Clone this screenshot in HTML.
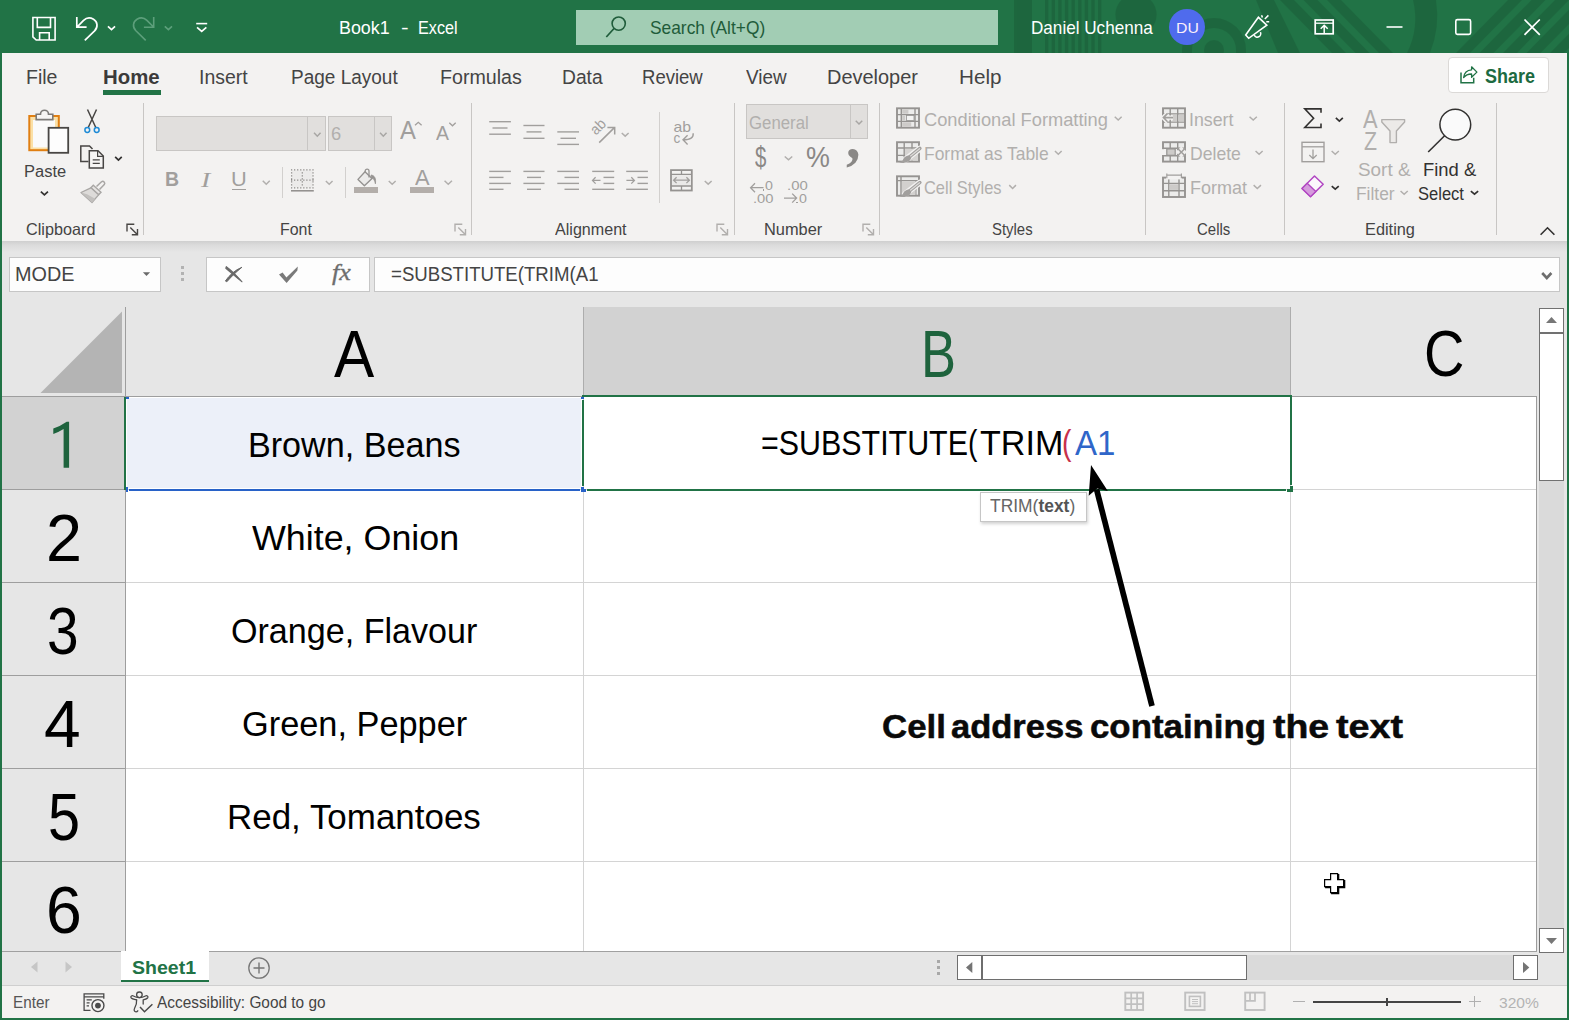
<!DOCTYPE html>
<html><head><meta charset="utf-8"><title>Book1 - Excel</title>
<style>
html,body{margin:0;padding:0}
body{width:1569px;height:1020px;position:relative;overflow:hidden;background:#fff;font-family:"Liberation Sans",sans-serif}
.t{position:absolute;white-space:nowrap;line-height:1;transform-origin:0 0}
.r{position:absolute;box-sizing:border-box;overflow:visible}
</style></head><body>
<div class="r" style="left:0px;top:0px;width:1569px;height:53px;background:#217346;"></div>
<div class="r" style="left:0px;top:53px;width:1569px;height:188px;background:#f3f2f1;"></div>
<div class="r" style="left:0px;top:241px;width:1569px;height:11px;background:linear-gradient(#cfcfcf,#dcdcdc 40%,#e6e6e6);"></div>
<div class="r" style="left:0px;top:252px;width:1569px;height:145px;background:#e6e6e6;"></div>
<div class="r" style="left:0px;top:397px;width:1569px;height:554px;background:#fff;"></div>
<div class="r" style="left:0px;top:951px;width:1569px;height:35px;background:#e6e6e6;"></div>
<div class="r" style="left:0px;top:986px;width:1569px;height:34px;background:#f3f2f1;"></div>
<svg class="r" style="left:1000px;top:0;overflow:hidden" width="569" height="53" viewBox="0 0 569 53" fill="none"><g fill="#000" opacity=".1"><rect x="14" y="0" width="18" height="53"/><rect x="45.0" y="0" width="3.4" height="53"/><rect x="51.6" y="0" width="3.4" height="53"/><rect x="58.2" y="0" width="3.4" height="53"/><rect x="64.9" y="0" width="3.4" height="53"/><rect x="71.5" y="0" width="3.4" height="53"/><rect x="78.1" y="0" width="3.4" height="53"/><rect x="84.7" y="0" width="3.4" height="53"/><rect x="91.3" y="0" width="3.4" height="53"/><rect x="98.0" y="0" width="3.4" height="53"/><circle cx="136" cy="14.6" r="20.6"/><path d="M214 18 a32 32 0 0 1 32 32 v3 h-10 v-3 a22 22 0 0 0 -22 -22 a22 22 0 0 0 -22 22 v3 h-10 v-3 a32 32 0 0 1 32 -32 Z"/><circle cx="214" cy="50" r="10"/><path d="M256 0 h18 l26 53 h-22 Z"/><path d="M280 0 h14 l52 53 h-14 Z"/><path d="M303.5 0 h14 l52 53 h-14 Z"/><path d="M327 0 h14 l52 53 h-14 Z"/><path d="M413 0 H436 A100 100 0 0 1 430 53 H407 A78 78 0 0 0 413 0 Z"/><path d="M456 53 h14 l52 -53 h-14 Z"/><path d="M479.5 53 h14 l52 -53 h-14 Z"/><path d="M503 53 h14 l52 -53 h-14 Z"/><path d="M526.5 53 h14 l52 -53 h-14 Z"/><path d="M550 53 h14 l52 -53 h-14 Z"/></g></svg>
<div class="t" style="left:339.43px;top:18.92px;font-size:18.17px;color:#fff;transform:scaleX(0.9848);">Book1</div>
<div class="t" style="left:400.79px;top:18.92px;font-size:18.17px;color:#fff;transform:scaleX(1.2581);">-</div>
<div class="t" style="left:417.67px;top:18.92px;font-size:18.17px;color:#fff;transform:scaleX(0.8914);">Excel</div>
<div class="r" style="left:576px;top:10px;width:422px;height:35px;background:#a2cdb4;"></div>
<div class="t" style="left:650.22px;top:18.92px;font-size:18.17px;color:#1f5c3a;transform:scaleX(0.9552);">Search (Alt+Q)</div>
<div class="t" style="left:1030.70px;top:19.02px;font-size:18.17px;color:#fff;transform:scaleX(0.9421);">Daniel Uchenna</div>
<div class="r" style="left:1169px;top:9px;width:36px;height:36px;background:#4f6bed;border-radius:50%"></div>
<div class="t" style="left:1175.96px;top:20.13px;font-size:15.55px;color:#fbeffa;transform:scaleX(1.0133);">DU</div>
<div class="t" style="left:26.40px;top:66.77px;font-size:20.35px;color:#444444;transform:scaleX(0.9597);">File</div>
<div class="t" style="left:198.96px;top:66.77px;font-size:20.35px;color:#444444;transform:scaleX(0.9565);">Insert</div>
<div class="t" style="left:290.94px;top:66.77px;font-size:20.35px;color:#444444;transform:scaleX(0.9336);">Page Layout</div>
<div class="t" style="left:440.14px;top:66.77px;font-size:20.35px;color:#444444;transform:scaleX(0.9647);">Formulas</div>
<div class="t" style="left:561.52px;top:66.77px;font-size:20.35px;color:#444444;transform:scaleX(0.9465);">Data</div>
<div class="t" style="left:642.18px;top:66.77px;font-size:20.35px;color:#444444;transform:scaleX(0.9107);">Review</div>
<div class="t" style="left:745.72px;top:66.77px;font-size:20.35px;color:#444444;transform:scaleX(0.9289);">View</div>
<div class="t" style="left:827.26px;top:66.77px;font-size:20.35px;color:#444444;transform:scaleX(0.9807);">Developer</div>
<div class="t" style="left:959.00px;top:66.77px;font-size:20.35px;color:#444444;transform:scaleX(1.0169);">Help</div>
<div class="t" style="left:102.64px;top:66.77px;font-size:20.35px;color:#3b3a39;transform:scaleX(1.0005);font-weight:700;">Home</div>
<div class="r" style="left:103px;top:90px;width:57.5px;height:4.8px;background:#217346;"></div>
<div class="r" style="left:1448px;top:57px;width:101px;height:35.5px;background:#fff;border:1px solid #dbd9d7;border-radius:4px"></div>
<div class="t" style="left:1484.58px;top:66.27px;font-size:20.35px;color:#1d6b41;transform:scaleX(0.8830);font-weight:700;">Share</div>
<div class="r" style="left:143px;top:103px;width:1px;height:132px;background:#c8c6c4;"></div>
<div class="r" style="left:471px;top:103px;width:1px;height:132px;background:#c8c6c4;"></div>
<div class="r" style="left:733.5px;top:103px;width:1px;height:132px;background:#c8c6c4;"></div>
<div class="r" style="left:879px;top:103px;width:1px;height:132px;background:#c8c6c4;"></div>
<div class="r" style="left:1145px;top:103px;width:1px;height:132px;background:#c8c6c4;"></div>
<div class="r" style="left:1284px;top:103px;width:1px;height:132px;background:#c8c6c4;"></div>
<div class="r" style="left:1496px;top:103px;width:1px;height:132px;background:#c8c6c4;"></div>
<div class="r" style="left:282px;top:166.5px;width:1px;height:31.0px;background:#d2d0ce;"></div>
<div class="r" style="left:345px;top:166.5px;width:1px;height:31.0px;background:#d2d0ce;"></div>
<div class="r" style="left:659px;top:112px;width:1px;height:90.5px;background:#d2d0ce;"></div>
<div class="t" style="left:25.59px;top:221.02px;font-size:16.28px;color:#444;transform:scaleX(0.9968);">Clipboard</div>
<div class="t" style="left:279.69px;top:221.02px;font-size:16.28px;color:#444;transform:scaleX(0.9799);">Font</div>
<div class="t" style="left:554.67px;top:221.02px;font-size:16.28px;color:#444;transform:scaleX(0.9897);">Alignment</div>
<div class="t" style="left:764.26px;top:221.02px;font-size:16.28px;color:#444;transform:scaleX(1.0069);">Number</div>
<div class="t" style="left:991.63px;top:221.02px;font-size:16.28px;color:#444;transform:scaleX(0.9161);">Styles</div>
<div class="t" style="left:1197.45px;top:221.02px;font-size:16.28px;color:#444;transform:scaleX(0.9198);">Cells</div>
<div class="t" style="left:1365.06px;top:221.02px;font-size:16.28px;color:#444;transform:scaleX(1.0045);">Editing</div>
<div class="t" style="left:23.55px;top:162.96px;font-size:17.30px;color:#444444;transform:scaleX(0.9537);">Paste</div>
<div class="r" style="left:156px;top:116px;width:170px;height:35px;background:#e1dfdd;border:1px solid #c8c6c4"></div>
<div class="r" style="left:307px;top:116px;width:1px;height:35px;background:#c8c6c4;"></div>
<div class="r" style="left:328px;top:116px;width:64px;height:35px;background:#e1dfdd;border:1px solid #c8c6c4"></div>
<div class="r" style="left:373.5px;top:116px;width:1px;height:35px;background:#c8c6c4;"></div>
<div class="t" style="left:331.08px;top:125.29px;font-size:18.31px;color:#b1afad;transform:scaleX(1.0024);">6</div>
<div class="t" style="left:164.99px;top:169.49px;font-size:20.20px;color:#a19f9d;transform:scaleX(0.9656);font-weight:700;">B</div>
<div class="t" style="left:200.91px;top:169.68px;font-size:20.20px;color:#a19f9d;transform:scaleX(1.3822);font-style:italic;font-family:'Liberation Serif',serif;">I</div>
<div class="t" style="left:231.22px;top:169.49px;font-size:20.20px;color:#a19f9d;transform:scaleX(1.0806);">U</div>
<div class="r" style="left:232px;top:188.5px;width:14px;height:1.4px;background:#a19f9d;"></div>
<div class="t" style="left:399.85px;top:117.59px;font-size:25.87px;color:#a19f9d;transform:scaleX(0.9211);">A</div>
<div class="t" style="left:435.96px;top:121.66px;font-size:21.08px;color:#a19f9d;transform:scaleX(0.9232);">A</div>
<div class="t" style="left:415.46px;top:165.80px;font-size:22.67px;color:#a19f9d;transform:scaleX(0.9645);">A</div>
<div class="r" style="left:410px;top:187px;width:24px;height:6px;background:#b3aeaa;"></div>
<div class="r" style="left:354px;top:187px;width:24px;height:6px;background:#b3aeaa;"></div>
<div class="r" style="left:746px;top:104px;width:122px;height:34.5px;background:#e1dfdd;border:1px solid #c8c6c4"></div>
<div class="r" style="left:849.5px;top:104px;width:1px;height:34.5px;background:#c8c6c4;"></div>
<div class="t" style="left:748.56px;top:113.54px;font-size:18.02px;color:#b1afad;transform:scaleX(0.9320);">General</div>
<div class="t" style="left:755.38px;top:142.65px;font-size:29.00px;color:#8a8886;transform:scaleX(0.7040);">$</div>
<div class="t" style="left:805.86px;top:142.22px;font-size:29.51px;color:#8a8886;transform:scaleX(0.9104);">%</div>
<div class="t" style="left:845.84px;top:105.68px;font-size:62.00px;color:#8a8886;transform:scaleX(0.9402);font-weight:700;font-family:'Liberation Serif',serif;">,</div>
<div class="t" style="left:923.89px;top:110.99px;font-size:18.31px;color:#b1afad;transform:scaleX(0.9992);">Conditional Formatting</div>
<div class="t" style="left:923.77px;top:144.79px;font-size:18.31px;color:#b1afad;transform:scaleX(0.9529);">Format as Table</div>
<div class="t" style="left:923.98px;top:178.69px;font-size:18.31px;color:#b1afad;transform:scaleX(0.8971);">Cell Styles</div>
<div class="t" style="left:1189.46px;top:110.99px;font-size:18.31px;color:#b1afad;transform:scaleX(0.9707);">Insert</div>
<div class="t" style="left:1189.66px;top:144.79px;font-size:18.31px;color:#b1afad;transform:scaleX(0.9621);">Delete</div>
<div class="t" style="left:1189.62px;top:178.69px;font-size:18.31px;color:#b1afad;transform:scaleX(0.9846);">Format</div>
<div class="t" style="left:1357.95px;top:160.74px;font-size:18.02px;color:#b1afad;transform:scaleX(1.0489);">Sort &amp;</div>
<div class="t" style="left:1355.98px;top:184.54px;font-size:18.02px;color:#b1afad;transform:scaleX(0.9639);">Filter</div>
<div class="t" style="left:1422.89px;top:160.74px;font-size:18.02px;color:#323130;transform:scaleX(1.0211);">Find &amp;</div>
<div class="t" style="left:1418.16px;top:184.54px;font-size:18.02px;color:#323130;transform:scaleX(0.9176);">Select</div>
<div class="t" style="left:1362.86px;top:106.59px;font-size:25.29px;color:#b1afad;transform:scaleX(0.8648);">A</div>
<div class="t" style="left:1364.14px;top:128.59px;font-size:25.29px;color:#b1afad;transform:scaleX(0.8427);">Z</div>
<div class="r" style="left:9px;top:257px;width:152px;height:35px;background:#fdfdfd;border:1px solid #c6c6c6"></div>
<div class="t" style="left:15.37px;top:265.01px;font-size:19.77px;color:#444444;transform:scaleX(1.0030);">MODE</div>
<div class="r" style="left:206px;top:257px;width:164px;height:35px;background:#fdfdfd;border:1px solid #c6c6c6"></div>
<div class="r" style="left:374px;top:257px;width:1186px;height:35px;background:#fdfdfd;border:1px solid #c6c6c6"></div>
<div class="t" style="left:390.86px;top:265.38px;font-size:19.33px;color:#444444;transform:scaleX(0.9637);">=SUBSTITUTE(TRIM(A1</div>
<div class="t" style="left:332.21px;top:260.20px;font-size:24.00px;color:#6e6e6e;transform:scaleX(1.0801);font-style:italic;font-family:'Liberation Serif',serif;-webkit-text-stroke:0.35px #6e6e6e;">fx</div>
<div class="r" style="left:181px;top:266px;width:3px;height:3px;background:#b2b2b2;"></div>
<div class="r" style="left:181px;top:272px;width:3px;height:3px;background:#b2b2b2;"></div>
<div class="r" style="left:181px;top:278px;width:3px;height:3px;background:#b2b2b2;"></div>
<div class="r" style="left:584px;top:307px;width:706px;height:89px;background:#d2d2d2;"></div>
<div class="r" style="left:0px;top:397px;width:125px;height:554px;background:#e6e6e6;"></div>
<div class="r" style="left:2px;top:397px;width:123px;height:92px;background:#d2d2d2;"></div>
<div class="r" style="left:125px;top:307px;width:1px;height:90px;background:#9e9e9e;"></div>
<div class="r" style="left:583px;top:307px;width:1px;height:90px;background:#adadad;"></div>
<div class="r" style="left:1290px;top:307px;width:1px;height:90px;background:#adadad;"></div>
<div class="r" style="left:125px;top:397px;width:1px;height:554px;background:#9e9e9e;"></div>
<div class="r" style="left:2px;top:396px;width:1535px;height:1px;background:#9e9e9e;"></div>
<div class="r" style="left:1536px;top:396px;width:1px;height:556px;background:#9c9c9c;"></div>
<div class="r" style="left:2px;top:951px;width:1535px;height:1px;background:#a0a0a0;"></div>
<div class="r" style="left:2px;top:489px;width:123px;height:1px;background:#9e9e9e;"></div>
<div class="r" style="left:126px;top:489px;width:1410px;height:1px;background:#d4d4d4;"></div>
<div class="r" style="left:2px;top:582px;width:123px;height:1px;background:#9e9e9e;"></div>
<div class="r" style="left:126px;top:582px;width:1410px;height:1px;background:#d4d4d4;"></div>
<div class="r" style="left:2px;top:675px;width:123px;height:1px;background:#9e9e9e;"></div>
<div class="r" style="left:126px;top:675px;width:1410px;height:1px;background:#d4d4d4;"></div>
<div class="r" style="left:2px;top:768px;width:123px;height:1px;background:#9e9e9e;"></div>
<div class="r" style="left:126px;top:768px;width:1410px;height:1px;background:#d4d4d4;"></div>
<div class="r" style="left:2px;top:861px;width:123px;height:1px;background:#9e9e9e;"></div>
<div class="r" style="left:126px;top:861px;width:1410px;height:1px;background:#d4d4d4;"></div>
<div class="r" style="left:583px;top:397px;width:1px;height:554px;background:#d4d4d4;"></div>
<div class="r" style="left:1290px;top:397px;width:1px;height:554px;background:#d4d4d4;"></div>
<div class="t" style="left:334.38px;top:320.50px;font-size:66.13px;color:#000;transform:scaleX(0.9123);">A</div>
<div class="t" style="left:920.69px;top:320.50px;font-size:66.13px;color:#1e633d;transform:scaleX(0.7943);">B</div>
<div class="t" style="left:1423.70px;top:322.20px;font-size:64.36px;color:#000;transform:scaleX(0.8700);">C</div>
<div class="t" style="left:45.52px;top:505.13px;font-size:66.28px;color:#000;transform:scaleX(0.9761);">2</div>
<div class="t" style="left:47.09px;top:598.18px;font-size:66.28px;color:#000;transform:scaleX(0.8576);">3</div>
<div class="t" style="left:44.38px;top:690.34px;font-size:67.15px;color:#000;transform:scaleX(0.9810);">4</div>
<div class="t" style="left:47.90px;top:784.28px;font-size:66.28px;color:#000;transform:scaleX(0.8690);">5</div>
<div class="t" style="left:45.68px;top:877.18px;font-size:66.28px;color:#000;transform:scaleX(0.9711);">6</div>
<div class="r" style="left:127px;top:398px;width:454px;height:90px;background:#ecf0f9;"></div>
<div class="r" style="left:129px;top:489px;width:451px;height:2px;background:#2862c8;"></div>
<div class="r" style="left:126px;top:397px;width:2.7px;height:2px;background:#2862c8;"></div>
<div class="r" style="left:126px;top:487px;width:2px;height:5px;background:#2862c8;"></div>
<div class="r" style="left:581px;top:397px;width:3px;height:2px;background:#2862c8;"></div>
<div class="r" style="left:124px;top:397px;width:2px;height:93px;background:#217346;"></div>
<div class="t" style="left:248.20px;top:428.08px;font-size:34.45px;color:#000;transform:scaleX(0.9909);">Brown, Beans</div>
<div class="t" style="left:251.86px;top:520.53px;font-size:34.45px;color:#000;transform:scaleX(1.0406);">White, Onion</div>
<div class="t" style="left:230.90px;top:613.83px;font-size:34.45px;color:#000;transform:scaleX(0.9899);">Orange, Flavour</div>
<div class="t" style="left:242.03px;top:706.83px;font-size:34.45px;color:#000;transform:scaleX(0.9969);">Green, Pepper</div>
<div class="t" style="left:227.33px;top:799.63px;font-size:34.45px;color:#000;transform:scaleX(1.0148);">Red, Tomantoes</div>
<div class="r" style="left:582px;top:395px;width:710px;height:2px;background:#217346;"></div>
<div class="r" style="left:587px;top:489px;width:699px;height:2px;background:#217346;"></div>
<div class="r" style="left:582px;top:400px;width:2px;height:86px;background:#217346;"></div>
<div class="r" style="left:1290px;top:395px;width:2px;height:90px;background:#217346;"></div>
<div class="r" style="left:1290px;top:486px;width:3px;height:6px;background:#217346;"></div>
<div class="r" style="left:1287px;top:489px;width:3px;height:3px;background:#217346;"></div>
<div class="r" style="left:581px;top:487px;width:3px;height:5px;background:#2862c8;"></div>
<div class="r" style="left:584px;top:489px;width:2px;height:3px;background:#2862c8;"></div>
<div class="t" style="left:760.54px;top:426.43px;font-size:34.45px;color:#000;transform:scaleX(0.8829);">=SUBSTITUTE</div>
<div class="t" style="left:968.25px;top:426.43px;font-size:34.45px;color:#000;transform:scaleX(0.8216);">(</div>
<div class="t" style="left:980.25px;top:426.43px;font-size:34.45px;color:#000;transform:scaleX(0.9894);">TRIM</div>
<div class="t" style="left:1062.00px;top:426.43px;font-size:34.45px;color:#c8324b;transform:scaleX(0.8216);">(</div>
<div class="t" style="left:1074.93px;top:426.43px;font-size:34.45px;color:#2f66c9;transform:scaleX(0.9590);">A1</div>
<div class="r" style="left:980px;top:492.4px;width:107px;height:30px;background:#fff;border:1px solid #c6c6c6;box-shadow:1px 2px 3px rgba(0,0,0,.18)"></div>
<div class="t" style="left:990.37px;top:497.00px;font-size:18.90px;transform:scaleX(0.9226)"><span style="color:#666;">TRIM(</span><span style="color:#555;font-weight:700;">text</span><span style="color:#666;">)</span></div>
<div class="t" style="left:881.57px;top:711.19px;font-size:32.85px;color:#0a0a0a;transform:scaleX(1.0607);font-weight:700;-webkit-text-stroke:0.5px #0a0a0a;">Cell</div>
<div class="t" style="left:951.00px;top:711.19px;font-size:32.85px;color:#0a0a0a;transform:scaleX(1.0511);font-weight:700;-webkit-text-stroke:0.5px #0a0a0a;">address</div>
<div class="t" style="left:1089.89px;top:711.19px;font-size:32.85px;color:#0a0a0a;transform:scaleX(1.0611);font-weight:700;-webkit-text-stroke:0.5px #0a0a0a;">containing</div>
<div class="t" style="left:1272.55px;top:711.19px;font-size:32.85px;color:#0a0a0a;transform:scaleX(1.1411);font-weight:700;-webkit-text-stroke:0.5px #0a0a0a;">the</div>
<div class="t" style="left:1335.80px;top:711.19px;font-size:32.85px;color:#0a0a0a;transform:scaleX(1.1498);font-weight:700;-webkit-text-stroke:0.5px #0a0a0a;">text</div>
<div class="r" style="left:1537px;top:307px;width:30px;height:645px;background:#e6e6e6;"></div>
<div class="r" style="left:1539px;top:333px;width:25px;height:596px;background:#dadada;"></div>
<div class="r" style="left:1539px;top:308px;width:25px;height:25px;background:#fff;border:1px solid #717171"></div>
<div class="r" style="left:1539px;top:333px;width:25px;height:148px;background:#fff;border:1px solid #717171"></div>
<div class="r" style="left:1539px;top:928px;width:25px;height:25px;background:#fff;border:1px solid #717171"></div>
<div class="r" style="left:957px;top:955px;width:581px;height:25px;background:#dadada;"></div>
<div class="r" style="left:957px;top:955px;width:25px;height:25px;background:#fff;border:1px solid #6e6e6e"></div>
<div class="r" style="left:982px;top:955px;width:265px;height:25px;background:#fff;border:1px solid #6e6e6e"></div>
<div class="r" style="left:1513px;top:955px;width:25px;height:25px;background:#fff;border:1px solid #6e6e6e"></div>
<div class="r" style="left:937px;top:960px;width:3px;height:3px;background:#a8a8a8;"></div>
<div class="r" style="left:937px;top:966px;width:3px;height:3px;background:#a8a8a8;"></div>
<div class="r" style="left:937px;top:972px;width:3px;height:3px;background:#a8a8a8;"></div>
<div class="r" style="left:120.5px;top:951px;width:88.5px;height:31px;background:#fff;"></div>
<div class="r" style="left:120.5px;top:979.5px;width:88.5px;height:2.6px;background:#217346;"></div>
<div class="t" style="left:131.93px;top:957.88px;font-size:19.04px;color:#217346;transform:scaleX(1.0266);font-weight:700;">Sheet1</div>
<div class="r" style="left:0px;top:985px;width:1569px;height:1px;background:#cfcfcf;"></div>
<div class="t" style="left:12.50px;top:994.42px;font-size:16.28px;color:#555;transform:scaleX(0.9380);">Enter</div>
<div class="t" style="left:156.97px;top:994.42px;font-size:16.28px;color:#444;transform:scaleX(0.9463);">Accessibility: Good to go</div>
<div class="t" style="left:1499.41px;top:994.55px;font-size:15.41px;color:#b4b4b4;transform:scaleX(1.0125);">320%</div>
<div class="r" style="left:1313px;top:1000.6px;width:148px;height:2px;background:#444;"></div>
<div class="r" style="left:1386px;top:997.5px;width:2.4px;height:8.6px;background:#444;"></div>
<div class="r" style="left:1293px;top:1001px;width:11.5px;height:1.3px;background:#b0b0b0;"></div>
<div class="r" style="left:1469px;top:1001px;width:11.5px;height:1.3px;background:#b0b0b0;"></div>
<div class="r" style="left:1474.1px;top:995.8px;width:1.3px;height:11.5px;background:#b0b0b0;"></div>
<div class="t" style="left:765.45px;top:179.35px;font-size:13.52px;color:#a19f9d;transform:scaleX(1.0524);">0</div>
<div class="t" style="left:752.86px;top:191.75px;font-size:13.52px;color:#a19f9d;transform:scaleX(1.0921);">.00</div>
<div class="r" style="left:762.6px;top:189.3px;width:1.6px;height:1.6px;background:#a19f9d;"></div>
<div class="t" style="left:786.64px;top:179.35px;font-size:13.52px;color:#a19f9d;transform:scaleX(1.1038);">.00</div>
<div class="t" style="left:799.45px;top:191.75px;font-size:13.52px;color:#a19f9d;transform:scaleX(1.0524);">0</div>
<div class="r" style="left:796.4px;top:201.7px;width:1.6px;height:1.6px;background:#a19f9d;"></div>
<svg class="r" style="left:0;top:0" width="1569" height="1020" viewBox="0 0 1569 1020" fill="none"><path d="M122 311.5 V393 H40.5 Z" fill="#b4b4b4"/>
<path d="M69.1 421.8 L66.7 421.8 Q60.5 426.2 53.3 428.5 L53.3 433.9 Q58.8 432.2 63.6 429.1 L63.6 467.8 L69.1 467.8 Z" fill="#1e633d"/>
<path d="M1152 706 L1096.6 489.5" stroke="#000" stroke-width="5.7" stroke-linecap="butt"/>
<path d="M1091 465 L1107.8 491 L1097.2 488.6 L1088.7 495.8 Z" fill="#000"/>
<path d="M1331.7 874.7 h7 v6 h6 v7 h-6 v6 h-7 v-6 h-6 v-7 h6 Z" fill="#000" stroke="#000" stroke-width="1.2"/>
<path d="M1330.6 873.6 h7 v6 h6 v7 h-6 v6 h-7 v-6 h-6 v-7 h6 Z" fill="#fff" stroke="#000" stroke-width="1.2"/>
<path d="M1546 323 L1551.5 317 L1557 323 Z" fill="#777"/>
<path d="M1546 938 L1557 938 L1551.5 944 Z" fill="#777"/>
<path d="M972.3 962 L972.3 973 L966 967.5 Z" fill="#747474"/>
<path d="M1523 962 L1523 973 L1529.3 967.5 Z" fill="#747474"/>
<path d="M37.5 961.5 L37.5 972.5 L31 967 Z" fill="#c6c6c6"/>
<path d="M65.5 961.5 L65.5 972.5 L72 967 Z" fill="#c6c6c6"/>
<circle cx="259" cy="968" r="10.2" stroke="#767676" stroke-width="1.3"/><path d="M253.5 968 h11 M259 962.5 v11" stroke="#767676" stroke-width="1.4"/>
<path d="M32.9 17.5 H55.1 V40 H36.2 L32.9 36.8 Z" stroke="#fff" stroke-width="1.6"/><path d="M37.3 17.5 V27.4 H50.5 V17.5 M39.6 40 V32.8 H49.2 V40" stroke="#fff" stroke-width="1.6"/>
<path d="M76.8 17 V27.2 H86.6 M77.2 26.8 L83.6 20.4 C86 18 90 17.2 93.5 19.2 C97.6 21.6 98.3 27 94.6 30.8 L84.8 40.4" stroke="#fff" stroke-width="1.7"/>
<path d="M107.95 26.35 L111.50 29.55 L115.05 26.35" stroke="#fff" stroke-width="1.7"/>
<path d="M153.7 17 V27.2 H143.9 M153.3 26.8 L146.9 20.4 C144.5 18 140.5 17.2 137 19.2 C132.9 21.6 132.2 27 135.9 30.8 L145.7 40.4" stroke="#5d9f7b" stroke-width="1.6"/>
<path d="M164.80 26.30 L168.40 29.60 L172.00 26.30" stroke="#5d9f7b" stroke-width="1.6"/>
<path d="M196.2 23.6 H207.2" stroke="#fff" stroke-width="1.6"/>
<path d="M197.05 27.45 L201.70 31.35 L206.35 27.45" stroke="#fff" stroke-width="1.7"/>
<circle cx="618.7" cy="23.6" r="6.6" stroke="#1f5c3a" stroke-width="1.6"/><path d="M614 28.5 L606.3 37" stroke="#1f5c3a" stroke-width="1.7"/>
<path d="M1245.7 35 L1258.4 17.3 L1266.8 25.2 L1248.7 38.3 Z" stroke="#fff" stroke-width="1.6" stroke-linejoin="miter"/><path d="M1254.2 35.2 a3.4 3.4 0 0 0 6.2 -3" stroke="#fff" stroke-width="1.5"/><path d="M1261.6 15.2 L1262.4 17.4 M1264.8 19 L1268.4 15.4 M1266.3 21.8 H1269.2" stroke="#fff" stroke-width="1.5"/>
<rect x="1315.2" y="20" width="18" height="13.8" stroke="#fff" stroke-width="1.7"/><path d="M1315 23.2 H1333.4" stroke="#fff" stroke-width="1.3"/><path d="M1324.2 33.6 V25.6 M1320.7 28.7 L1324.2 25.3 L1327.7 28.7" stroke="#fff" stroke-width="1.5"/>
<path d="M1386.5 27 H1402.5" stroke="#fff" stroke-width="1.6"/>
<rect x="1455.8" y="19.6" width="14.8" height="14.8" rx="1.6" stroke="#fff" stroke-width="1.6"/>
<path d="M1524.5 19.5 L1539.8 34.8 M1539.8 19.5 L1524.5 34.8" stroke="#fff" stroke-width="1.7"/>
<path d="M1461 72.4 V82.7 H1473.7 V77.7" stroke="#217346" stroke-width="1.5"/><path d="M1463.6 77.6 C1464.2 72.6 1467.2 70 1471.6 69.8 V66.8 L1476.9 72.1 L1471.6 77.2 V74 C1468 74 1465.6 75 1463.6 77.6 Z" stroke="#217346" stroke-width="1.3" stroke-linejoin="round"/>
<rect x="29.3" y="116" width="29.5" height="34.2" fill="#fbe0a6" stroke="#e07f12" stroke-width="2"/><rect x="33" y="120" width="22" height="27.5" fill="#fafafa"/><path d="M36.2 119.6 V114.2 H40.5 a4 4 0 0 1 8 0 H52.8 V119.6 Z" fill="#f6f5f4" stroke="#7d7b79" stroke-width="1.6"/><rect x="48.6" y="127.8" width="19.6" height="25" fill="#fdfdfd" stroke="#484644" stroke-width="1.8"/>
<path d="M40.85 191.65 L44.40 194.95 L47.95 191.65" stroke="#323130" stroke-width="1.7"/>
<path d="M87.5 109.5 L96 128 M96.5 109.5 L88 128" stroke="#484644" stroke-width="1.5"/><circle cx="87.3" cy="130" r="2.4" stroke="#1e8bd6" stroke-width="1.5"/><circle cx="96.7" cy="130" r="2.4" stroke="#1e8bd6" stroke-width="1.5"/>
<path d="M88.5 161.5 H80.8 V146 H89.5 L92.5 149" stroke="#484644" stroke-width="1.5"/><path d="M89.3 150.8 H98 L103.3 156 V168 H89.3 Z" fill="#f6f5f4" stroke="#484644" stroke-width="1.5"/><path d="M97.6 151 V156.4 H103" stroke="#484644" stroke-width="1.2"/><path d="M92.7 159.8 H99.8 M92.7 163.3 H99.8" stroke="#484644" stroke-width="1.2"/>
<path d="M115.15 156.85 L118.45 160.15 L121.75 156.85" stroke="#323130" stroke-width="1.7"/>
<path d="M96.5 186.5 L101.5 181.8 a2 2 0 0 1 2.8 2.8 L99.5 189.5" stroke="#a8a6a4" stroke-width="1.5"/><path d="M93.3 185.2 L101 192.2 L98.6 194.8 L90.9 187.8 Z" stroke="#a8a6a4" stroke-width="1.4" fill="#e6e4e2"/><path d="M90.9 187.8 L81 192.5 L92 202.5 L98.6 194.8 Z" fill="#dddbd9" stroke="#a8a6a4" stroke-width="1.3" stroke-linejoin="round"/><path d="M81 192.5 L92 202.5 L95.2 198.8 L87 194.2 Z" fill="#c2c0be"/>
<path d="M127.0 231.5 V224.2 H134.3" stroke="#484644" stroke-width="1.4"/><path d="M130.3 227.5 L137.3 234.5 M137.5 229.0 V234.7 H131.8" stroke="#484644" stroke-width="1.4"/>
<path d="M455.0 231.5 V224.2 H462.3" stroke="#b1afad" stroke-width="1.4"/><path d="M458.3 227.5 L465.3 234.5 M465.5 229.0 V234.7 H459.8" stroke="#b1afad" stroke-width="1.4"/>
<path d="M717.0 231.5 V224.2 H724.3" stroke="#b1afad" stroke-width="1.4"/><path d="M720.3 227.5 L727.3 234.5 M727.5 229.0 V234.7 H721.8" stroke="#b1afad" stroke-width="1.4"/>
<path d="M863.0 231.5 V224.2 H870.3" stroke="#b1afad" stroke-width="1.4"/><path d="M866.3 227.5 L873.3 234.5 M873.5 229.0 V234.7 H867.8" stroke="#b1afad" stroke-width="1.4"/>
<path d="M314.05 132.75 L317.30 136.25 L320.55 132.75" stroke="#a8a6a4" stroke-width="1.5"/>
<path d="M380.05 132.75 L383.30 136.25 L386.55 132.75" stroke="#a8a6a4" stroke-width="1.5"/>
<path d="M262.75 180.75 L266.25 184.25 L269.75 180.75" stroke="#b1afad" stroke-width="1.5"/>
<path d="M325.85 181.05 L329.20 184.25 L332.55 181.05" stroke="#b1afad" stroke-width="1.5"/>
<path d="M388.75 181.05 L392.20 184.25 L395.65 181.05" stroke="#b1afad" stroke-width="1.5"/>
<path d="M444.55 180.75 L448.25 184.25 L451.95 180.75" stroke="#b1afad" stroke-width="1.5"/>
<path d="M415 125.3 L418.3 122.3 L421.6 125.3" stroke="#a19f9d" stroke-width="1.3"/>
<path d="M449.3 122.8 L452.5 125.8 L455.7 122.8" stroke="#a19f9d" stroke-width="1.3"/>
<rect x="292" y="170.3" width="20.6" height="17.2" fill="#ecebea"/><path d="M290.98 169.28h1.25v1.25h-1.25zM290.98 187.28h1.25v1.25h-1.25zM290.98 179.47h1.25v1.25h-1.25zM294.03 169.28h1.25v1.25h-1.25zM294.03 187.28h1.25v1.25h-1.25zM294.03 179.47h1.25v1.25h-1.25zM297.09 169.28h1.25v1.25h-1.25zM297.09 187.28h1.25v1.25h-1.25zM297.09 179.47h1.25v1.25h-1.25zM300.15 169.28h1.25v1.25h-1.25zM300.15 187.28h1.25v1.25h-1.25zM300.15 179.47h1.25v1.25h-1.25zM303.20 169.28h1.25v1.25h-1.25zM303.20 187.28h1.25v1.25h-1.25zM303.20 179.47h1.25v1.25h-1.25zM306.26 169.28h1.25v1.25h-1.25zM306.26 187.28h1.25v1.25h-1.25zM306.26 179.47h1.25v1.25h-1.25zM309.32 169.28h1.25v1.25h-1.25zM309.32 187.28h1.25v1.25h-1.25zM309.32 179.47h1.25v1.25h-1.25zM312.37 169.28h1.25v1.25h-1.25zM312.37 187.28h1.25v1.25h-1.25zM312.37 179.47h1.25v1.25h-1.25zM290.98 172.28h1.25v1.25h-1.25zM312.38 172.28h1.25v1.25h-1.25zM301.68 172.28h1.25v1.25h-1.25zM290.98 175.28h1.25v1.25h-1.25zM312.38 175.28h1.25v1.25h-1.25zM301.68 175.28h1.25v1.25h-1.25zM290.98 178.28h1.25v1.25h-1.25zM312.38 178.28h1.25v1.25h-1.25zM301.68 178.28h1.25v1.25h-1.25zM290.98 181.28h1.25v1.25h-1.25zM312.38 181.28h1.25v1.25h-1.25zM301.68 181.28h1.25v1.25h-1.25zM290.98 184.28h1.25v1.25h-1.25zM312.38 184.28h1.25v1.25h-1.25zM301.68 184.28h1.25v1.25h-1.25z" fill="#8a8886"/><path d="M291 190.8 H313.8" stroke="#8f8d8b" stroke-width="1.5"/>
<path d="M358 179.4 L365 171.8 L372 178.5 L364.4 185.8 Z" stroke="#959391" stroke-width="1.4" stroke-linejoin="round" fill="#ecebea"/><path d="M365.2 172 V171 a1.9 1.9 0 0 1 3.8 0 V177.6" stroke="#959391" stroke-width="1.3"/><path d="M371 175 C374.6 175.4 376.2 178.6 375.4 183.8 C374.8 180.6 373.8 178.6 371.6 177.8 Z" fill="#959391" stroke="#959391" stroke-width="0.8" stroke-linejoin="round"/>
<path d="M489.2 121.7 H510.9" stroke="#a19f9d" stroke-width="1.4"/>
<path d="M492.5 128.0 H507.5" stroke="#a19f9d" stroke-width="1.4"/>
<path d="M489.2 134.2 H510.9" stroke="#a19f9d" stroke-width="1.4"/>
<path d="M523.4 125.5 H544.5" stroke="#a19f9d" stroke-width="1.4"/>
<path d="M526.5 131.9 H541.5" stroke="#a19f9d" stroke-width="1.4"/>
<path d="M523.4 138.3 H544.5" stroke="#a19f9d" stroke-width="1.4"/>
<path d="M557.3 131.9 H579.0" stroke="#a19f9d" stroke-width="1.4"/>
<path d="M560.5 138.3 H576.0" stroke="#a19f9d" stroke-width="1.4"/>
<path d="M557.3 144.4 H579.0" stroke="#a19f9d" stroke-width="1.4"/>
<text x="0" y="0" transform="translate(596,135.8) rotate(-45)" font-family="Liberation Sans" font-size="15" fill="#a19f9d" textLength="15.5" lengthAdjust="spacingAndGlyphs">ab</text><path d="M599.2 142.6 L614.4 127.6 M607.4 127.4 H614.7 V134.6" stroke="#a19f9d" stroke-width="1.5"/>
<path d="M621.75 132.95 L625.20 136.15 L628.65 132.95" stroke="#b1afad" stroke-width="1.5"/>
<text x="673.4" y="132.4" font-family="Liberation Sans" font-size="15" fill="#a19f9d" textLength="17.6" lengthAdjust="spacingAndGlyphs">ab</text><text x="673.4" y="143.3" font-family="Liberation Sans" font-size="15" fill="#a19f9d" textLength="6.8" lengthAdjust="spacingAndGlyphs">c</text><path d="M693.2 133.2 C693.6 137.6 690.5 139.8 683.4 139.8 M687.6 135.2 L683 139.8 L687.6 144.4" stroke="#a19f9d" stroke-width="1.4"/>
<path d="M489.2 171.4 H510.9" stroke="#a19f9d" stroke-width="1.4"/>
<path d="M489.2 177.4 H503.5" stroke="#a19f9d" stroke-width="1.4"/>
<path d="M489.2 183.4 H510.9" stroke="#a19f9d" stroke-width="1.4"/>
<path d="M489.2 189.3 H503.5" stroke="#a19f9d" stroke-width="1.4"/>
<path d="M523.4 171.4 H544.5" stroke="#a19f9d" stroke-width="1.4"/>
<path d="M527.0 177.4 H541.0" stroke="#a19f9d" stroke-width="1.4"/>
<path d="M523.4 183.4 H544.5" stroke="#a19f9d" stroke-width="1.4"/>
<path d="M527.0 189.3 H541.0" stroke="#a19f9d" stroke-width="1.4"/>
<path d="M557.3 171.4 H579.0" stroke="#a19f9d" stroke-width="1.4"/>
<path d="M564.5 177.4 H579.0" stroke="#a19f9d" stroke-width="1.4"/>
<path d="M557.3 183.4 H579.0" stroke="#a19f9d" stroke-width="1.4"/>
<path d="M564.5 189.3 H579.0" stroke="#a19f9d" stroke-width="1.4"/>
<path d="M592.2 171.4 H614.2" stroke="#a19f9d" stroke-width="1.4"/>
<path d="M603.5 177.4 H614.2" stroke="#a19f9d" stroke-width="1.4"/>
<path d="M603.5 183.4 H614.2" stroke="#a19f9d" stroke-width="1.4"/>
<path d="M592.2 189.3 H614.2" stroke="#a19f9d" stroke-width="1.4"/>
<path d="M592.5 180.4 H600.5 M595.6 177.2 L592.5 180.4 L595.6 183.6" stroke="#a19f9d" stroke-width="1.3"/>
<path d="M626.2 171.4 H647.9" stroke="#a19f9d" stroke-width="1.4"/>
<path d="M637.5 177.4 H647.9" stroke="#a19f9d" stroke-width="1.4"/>
<path d="M637.5 183.4 H647.9" stroke="#a19f9d" stroke-width="1.4"/>
<path d="M626.2 189.3 H647.9" stroke="#a19f9d" stroke-width="1.4"/>
<path d="M626.4 180.4 H634.4 M631.3 177.2 L634.4 180.4 L631.3 183.6" stroke="#a19f9d" stroke-width="1.3"/>
<rect x="671" y="170.1" width="20.8" height="20.4" fill="#f3f2f1" stroke="#959391" stroke-width="1.8"/><rect x="672" y="175.2" width="18.8" height="10" fill="#eae9e8"/><path d="M671 174.4 H691.8 M671 186 H691.8 M681.5 170.1 V174.4 M681.5 186 V190.5" stroke="#959391" stroke-width="1.3"/><path d="M673.8 180.2 H689.2 M676.6 177.3 L673.6 180.2 L676.6 183.1 M686.4 177.3 L689.4 180.2 L686.4 183.1" stroke="#a19f9d" stroke-width="1.3"/>
<path d="M704.75 180.95 L708.20 184.15 L711.65 180.95" stroke="#b1afad" stroke-width="1.5"/>
<path d="M855.75 120.75 L859.00 124.05 L862.25 120.75" stroke="#a8a6a4" stroke-width="1.5"/>
<path d="M784.75 156.45 L788.50 159.75 L792.25 156.45" stroke="#b1afad" stroke-width="1.5"/>
<path d="M750.6 187.7 H763.5 M755 183.2 L750.6 187.7 L755 192.2" stroke="#a19f9d" stroke-width="1.3"/>
<path d="M784 198.1 H796.6 M792.2 193.6 L796.6 198.1 L792.2 202.6" stroke="#a19f9d" stroke-width="1.3"/>
<rect x="897" y="108.3" width="22" height="19.4" fill="#ececeb" stroke="#959391" stroke-width="1.9"/><path d="M901.3 108.3 V127.69999999999999 M915 108.3 V127.69999999999999 M897 114.6 H919 M897 121.4 H919 " stroke="#959391" stroke-width="1.4"/>
<rect x="902.2" y="109.5" width="6.2" height="4.2" fill="#cdcbc9"/><rect x="902.2" y="115.5" width="3" height="5" fill="#cdcbc9"/><rect x="906.6" y="115.5" width="7.4" height="5" fill="#f4f4f3" stroke="#959391" stroke-width="0.8"/><rect x="902.2" y="122.3" width="9" height="4.3" fill="#cdcbc9"/>
<path d="M1114.75 116.75 L1118.20 120.05 L1121.65 116.75" stroke="#b1afad" stroke-width="1.5"/>
<rect x="897" y="142.2" width="22" height="19.4" fill="#ececeb" stroke="#959391" stroke-width="1.9"/><path d="M904.2 142.2 V161.6 M912 142.2 V161.6 M897 148 H919 M897 155.4 H919 " stroke="#959391" stroke-width="1.4"/>
<rect x="905" y="148.8" width="13" height="11.8" fill="#d6d4d2"/>
<path d="M919.8 148.6 L905 160" stroke="#f3f2f1" stroke-width="6" stroke-linecap="round"/><path d="M919.9 148.4 L909 157.2" stroke="#a19f9d" stroke-width="3.4" stroke-linecap="round"/><path d="M919.6 148.7 L910 156.4" stroke="#dddbd9" stroke-width="1.3" stroke-linecap="round"/><path d="M909.4 155.4 c-3.4 0 -5.4 1.8 -6.2 3.8 c-0.6 1.6 -2.2 2.6 -4.2 2.8 c3.6 2 10.6 1.2 12.4 -4.4 Z" fill="#a19f9d"/>
<path d="M1054.95 150.95 L1058.30 154.25 L1061.65 150.95" stroke="#b1afad" stroke-width="1.5"/>
<rect x="897" y="176.3" width="22" height="19.4" fill="#ececeb" stroke="#959391" stroke-width="1.9"/><path d="M901 176.3 V195.70000000000002 M897 180.6 H919 " stroke="#959391" stroke-width="1.4"/>
<rect x="902" y="181.5" width="13.4" height="13.2" fill="#d2d0ce"/><path d="M916 181 V195" stroke="#959391" stroke-width="1"/>
<path d="M919.8 182.7 L905 194.1" stroke="#f3f2f1" stroke-width="6" stroke-linecap="round"/><path d="M919.9 182.5 L909 191.29999999999998" stroke="#a19f9d" stroke-width="3.4" stroke-linecap="round"/><path d="M919.6 182.79999999999998 L910 190.5" stroke="#dddbd9" stroke-width="1.3" stroke-linecap="round"/><path d="M909.4 189.5 c-3.4 0 -5.4 1.8 -6.2 3.8 c-0.6 1.6 -2.2 2.6 -4.2 2.8 c3.6 2 10.6 1.2 12.4 -4.4 Z" fill="#a19f9d"/>
<path d="M1009.25 185.15 L1012.60 188.45 L1015.95 185.15" stroke="#b1afad" stroke-width="1.5"/>
<rect x="1163" y="108.3" width="22" height="19.4" fill="#ececeb" stroke="#959391" stroke-width="1.9"/><path d="M1170.2 108.3 V127.69999999999999 M1177.7 108.3 V127.69999999999999 M1163 113.9 H1185 M1163 122.1 H1185 " stroke="#959391" stroke-width="1.4"/>
<rect x="1172.5" y="114.7" width="4.4" height="6.6" fill="#cdcbc9"/><rect x="1178.6" y="114.7" width="5.4" height="6.6" fill="#cdcbc9"/>
<path d="M1163.6 117.6 H1173 M1167.6 113.2 L1163.2 117.6 L1167.6 122" stroke="#f3f2f1" stroke-width="4.2"/><path d="M1163.2 117.6 H1173 M1167.6 113.4 L1163.4 117.6 L1167.6 121.8" stroke="#a19f9d" stroke-width="1.6"/>
<path d="M1249.55 116.75 L1253.20 120.05 L1256.85 116.75" stroke="#b1afad" stroke-width="1.5"/>
<rect x="1163" y="142.2" width="22" height="19.4" fill="#ececeb" stroke="#959391" stroke-width="1.9"/><path d="M1170.2 142.2 V161.6 M1177.7 142.2 V161.6 M1163 148.2 H1185 M1163 155.8 H1185 " stroke="#959391" stroke-width="1.4"/>
<rect x="1160" y="149.2" width="7" height="5.8" fill="#f3f2f1"/><rect x="1166.8" y="148.9" width="8.4" height="6.4" fill="#cdcbc9" stroke="#959391" stroke-width="1.2"/><path d="M1181.3 146.4 L1187 152 L1181.3 157.8 L1175.6 152 Z" fill="#f0efee"/><path d="M1177.4 148.2 L1185.2 156 M1185.2 148.2 L1177.4 156" stroke="#a19f9d" stroke-width="1.5"/>
<path d="M1255.55 150.95 L1259.10 154.25 L1262.65 150.95" stroke="#b1afad" stroke-width="1.5"/>
<rect x="1163" y="177.6" width="22" height="19.4" fill="#ececeb" stroke="#959391" stroke-width="1.9"/><path d="M1168.8 177.6 V197.0 M1179 177.6 V197.0 M1163 183.4 H1185 M1163 190.7 H1185 " stroke="#959391" stroke-width="1.4"/>
<rect x="1166" y="176" width="16" height="3.4" fill="#f3f2f1"/><rect x="1169.7" y="184.3" width="8.4" height="5.6" fill="#cdcbc9"/><path d="M1166.8 173.6 V178.2 M1181.4 173.6 V178.2 M1166.8 175.2 H1181.4" stroke="#a19f9d" stroke-width="1.2"/>
<path d="M1253.65 185.15 L1257.30 188.45 L1260.95 185.15" stroke="#b1afad" stroke-width="1.5"/>
<path d="M1321 112.8 V108.9 H1304.8 L1313.6 118.2 L1304.8 127.5 H1321 V123.6" stroke="#323130" stroke-width="1.6" stroke-linejoin="miter"/>
<path d="M1335.85 117.85 L1339.35 121.05 L1342.85 117.85" stroke="#323130" stroke-width="1.7"/>
<rect x="1302" y="142.3" width="22" height="19.4" stroke="#a19f9d" stroke-width="1.4"/><path d="M1302 146.8 H1324" stroke="#a19f9d" stroke-width="1.3"/><path d="M1313 149.5 V158.5 M1309.3 155 L1313 158.6 L1316.7 155" stroke="#a19f9d" stroke-width="1.3"/>
<path d="M1331.65 151.05 L1335.25 154.25 L1338.85 151.05" stroke="#b1afad" stroke-width="1.5"/>
<path d="M1302 188.5 L1314.5 176 L1323.2 184.2 L1310.5 196.6 Z" fill="#fbf7fc" stroke="#b146c2" stroke-width="1.5" stroke-linejoin="round"/><path d="M1302 188.5 L1307.2 183.3 L1315.8 191.5 L1310.5 196.6 Z" fill="#d59bdd" stroke="#b146c2" stroke-width="1.3" stroke-linejoin="round"/>
<path d="M1331.75 186.15 L1335.25 189.15 L1338.75 186.15" stroke="#323130" stroke-width="1.7"/>
<path d="M1381.8 119.6 H1404.6 V122 L1396.4 131 V142.6 H1390 V131 L1381.8 122 Z" fill="#eceae8" stroke="#b1afad" stroke-width="1.4" stroke-linejoin="round"/>
<path d="M1400.55 190.95 L1404.15 194.25 L1407.75 190.95" stroke="#b1afad" stroke-width="1.5"/>
<circle cx="1455.3" cy="124.6" r="15.4" fill="#fafafa" stroke="#323130" stroke-width="1.5"/><path d="M1444.6 135.8 L1428.2 152" stroke="#323130" stroke-width="1.6"/>
<path d="M1470.85 191.05 L1474.50 194.15 L1478.15 191.05" stroke="#323130" stroke-width="1.7"/>
<path d="M1540.6 234.8 L1547.5 227.8 L1554.4 234.8" stroke="#323130" stroke-width="1.6"/>
<path d="M142.9 272.2 H150.1 L146.5 276 Z" fill="#6a6a6a"/>
<path d="M226.3 266.6 C231 270 237 276 242 281.8 C236.5 277.5 230.5 272 225.8 268.2 Z" fill="#6a6a6a" stroke="#6a6a6a" stroke-width="1.1" stroke-linejoin="round"/><path d="M225.4 281 C229 275.5 235 270 242 267.2 C236.5 271.5 231 277 226.8 281.8 Z" fill="#6a6a6a" stroke="#6a6a6a" stroke-width="1" stroke-linejoin="round"/>
<path d="M279 274.6 L282.6 272.6 L286.4 277.4 L297.8 266.4 L297.4 270.4 L286.6 283 Z" fill="#7a7a7a"/>
<path d="M1542.2 273 L1546.8 278 L1551.4 273" stroke="#6e6e6e" stroke-width="2.6"/>
<path d="M90.5 1010.4 H84.1 V993.8 H103.8 V998.8 M84.1 996.8 H103.8 M86.6 999.9 H91.8 M86.6 1002.8 H89.6 M86.6 1005.8 H89" stroke="#4a4a4a" stroke-width="1.3"/><circle cx="97.95" cy="1005.6" r="6" fill="#f3f2f1" stroke="#4a4a4a" stroke-width="1.4"/><circle cx="97.95" cy="1005.6" r="2.9" fill="#4a4a4a"/>
<circle cx="139.4" cy="994.8" r="2.8" stroke="#4a4a4a" stroke-width="1.3"/><path d="M136.6 999.8 C134 999.4 131.6 998.8 131 997.6 C130.4 996.2 132 995.2 133.4 996 C135 996.9 137 997.6 139.4 997.6 C141.8 997.6 143.8 996.9 145.4 996 C146.8 995.2 148.4 996.2 147.8 997.6 C147.2 998.8 145.4 999.4 143.2 999.8 V1004" stroke="#4a4a4a" stroke-width="1.3" stroke-linecap="round" stroke-linejoin="round"/><path d="M136.6 999.8 C137 1003 136 1005.5 134.6 1008.2 C133.6 1010.2 134.4 1011.8 136 1011.8 C136.8 1011.8 137.4 1011.4 137.8 1010.8" stroke="#4a4a4a" stroke-width="1.3" stroke-linecap="round"/><path d="M140 1007.1 L144.5 1011.8 L152.4 1004.2" stroke="#4a4a4a" stroke-width="1.5"/>
<rect x="1125.3" y="992.6" width="17.8" height="17.4" stroke="#c0c0c0" stroke-width="1.9"/><path d="M1125.3 998.4 H1143 M1125.3 1004.2 H1143 M1131.2 992.6 V1010 M1137.1 992.6 V1010" stroke="#c0c0c0" stroke-width="1.7"/>
<rect x="1185.2" y="992.6" width="19.4" height="17.4" stroke="#c0c0c0" stroke-width="1.9"/><rect x="1189.4" y="996.4" width="11" height="10" stroke="#c0c0c0" stroke-width="1.6"/><path d="M1192 999.5 H1198 M1192 1001.6 H1198 M1192 1003.7 H1198" stroke="#c0c0c0" stroke-width="1"/>
<rect x="1245.2" y="992.6" width="19.4" height="17.4" stroke="#c0c0c0" stroke-width="1.9"/><path d="M1250 992.6 V1000.8 H1255 V992.6 M1245.2 1000.8 H1250" stroke="#c0c0c0" stroke-width="1.7"/></svg>
<div class="r" style="left:0px;top:53px;width:2px;height:967px;background:#217346;"></div>
<div class="r" style="left:1567px;top:53px;width:2px;height:967px;background:#217346;"></div>
<div class="r" style="left:0px;top:1018px;width:1569px;height:2px;background:#217346;"></div>
</body></html>
